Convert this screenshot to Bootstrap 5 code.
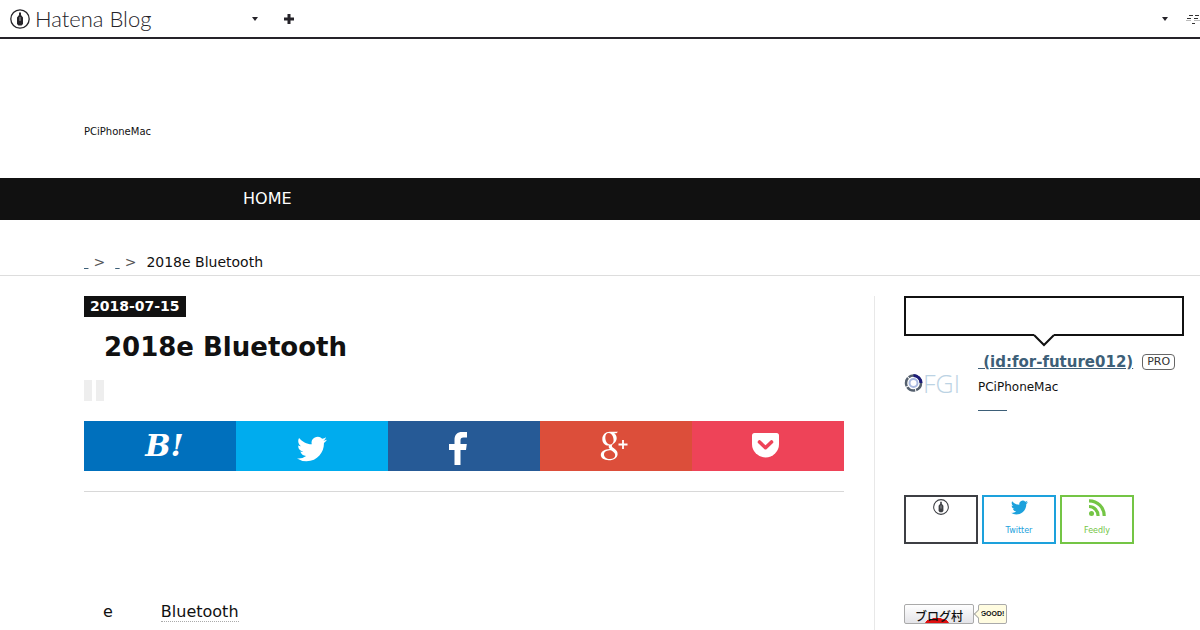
<!DOCTYPE html>
<html lang="ja">
<head>
<meta charset="utf-8">
<meta name="viewport" content="width=device-width, initial-scale=1">
<title>2018e Bluetooth</title>
<link rel="stylesheet" href="https://cdn.jsdelivr.net/npm/bootstrap@5.3.0/dist/css/bootstrap.min.css">
<style>
  body { font-family: "DejaVu Sans", "Noto Sans CJK JP", sans-serif; color: #111; background: #fff; line-height: 24px; overflow-x: hidden; }
  a { color: #3d5f78; }
  .topbar { height: 39px; border-bottom: 2px solid #252329; color: #252329; padding-left: 10px; overflow: hidden; }
  .brand { font: 300 22px/22px Lato, sans-serif; color: #252329; gap: 5px; width: 242px; }
  .icon-btn { background: none; border: 0; padding: 0; color: inherit; display: flex; }
  .topbar .tail { gap: 17px; }
  .page { padding-left: 84px; padding-right: 16px; }
  .masthead { height: 139px; padding-top: 81px; font-size: 10px; }
  .menu { background: #111; height: 42px; }
  .menu a { color: #fff; margin-left: 159px; }
  .crumbs { height: 56px; padding-top: 30px; border-bottom: 1px solid #ddd; font-size: 14px; }
  .crumbs .sep { color: #555; margin: 0 10px 0 5px; }
  .main-col { padding-right: 30px; border-right: 1px solid #e8e8e8; min-height: 334px; }
  .side-col { width: 280px; margin-left: 29px; flex: none; }
  .date { background: #111; color: #fff; font-size: 14px; line-height: 21px; padding: 0 6px; display: table; }
  .date a { color: #fff; }
  h1 { font-size: 26px; line-height: 36px; font-weight: 700; margin: 12px 0 15px 20px; }
  .tag { width: 8px; height: 21px; background: #eee; }
  .share { margin-top: 20px; }
  .share a { width: 20%; height: 50px; color: #fff; text-decoration: none; }
  .hatebu { background: #0070bd; font: italic 700 30px/50px "DejaVu Serif", serif; padding-left: 9px; }
  .tw { background: #00acee; padding-top: 6px; }
  .fb { background: #265a96; padding: 4px 12px 0 0; }
  .gp { background: #dc4e3a; padding-right: 4px; }
  .pk { background: #ee4358; padding: 0 6px 2px 0; }
  .rule { border-top: 1px solid #d8d8d8; margin-top: 20px; }
  .entry { padding: 108px 0 0 19px; gap: 48px; }
  .entry a { color: #111; text-decoration: none; border-bottom: 1px dotted #aaa; line-height: 20px; }
  .bubble { height: 40px; border: 2px solid #111; position: relative; }
  .bubble svg { position: absolute; left: 50%; top: 100%; margin-left: -11px; }
  .profile { margin-top: 14px; gap: 18px; height: 145px; }
  .profile .logo { width: 56px; padding-top: 19px; font: 300 25px/28px "Open Sans", Lato, sans-serif; color: #bcd3e4; }
  .who { font-size: 15px; font-weight: 700; gap: 9px; white-space: nowrap; }
  .pro { font-size: 11px; line-height: 14px; font-weight: 400; border: 1px solid #666; border-radius: 4px; color: #333; padding: 0 4px; }
  .bio { font-size: 12px; line-height: 26px; }
  .more { width: 29px; height: 11px; border-bottom: 1px solid #3d5f78; display: block; }
  .follow { gap: 4px; }
  .follow a { width: 74px; height: 49px; border: 2px solid; font-size: 8px; line-height: 12px; text-decoration: none; padding-top: 2px; gap: 9px; }
  .rank { margin-top: 60px; gap: 4px; }
  .rank a { height: 20px; text-decoration: none; color: #111; border: 1px solid #aaa; border-radius: 2px; line-height: 22px; }
  .mura { width: 70px; background: radial-gradient(ellipse 12px 5px at 32px 18px, #e01010 95%, transparent), linear-gradient(#fff, #e4e4e8); font-family: "Noto Sans CJK JP", sans-serif; font-size: 12px; font-weight: 500; text-align: center; overflow: hidden; }
  .rank .good { width: 29px; background: #fffce0; font: 700 7px/18px "DejaVu Sans", sans-serif; font-family: "Liberation Sans", sans-serif; text-align: center; position: relative; }
  .good::before { content: ""; position: absolute; left: -4px; top: 6px; width: 6px; height: 6px; background: #fffce0; border: solid #aaa; border-width: 0 0 1px 1px; transform: rotate(45deg); }
</style>
</head>
<body>
<svg class="d-none" xmlns="http://www.w3.org/2000/svg">
  <symbol id="bird" viewBox="0 0 24 24"><path fill="currentColor" d="M23.953 4.57a10 10 0 0 1-2.825.775 4.958 4.958 0 0 0 2.163-2.723c-.951.555-2.005.959-3.127 1.184a4.92 4.92 0 0 0-8.384 4.482C7.69 8.095 4.067 6.13 1.64 3.162a4.822 4.822 0 0 0-.666 2.475c0 1.71.87 3.213 2.188 4.096a4.904 4.904 0 0 1-2.228-.616v.06a4.923 4.923 0 0 0 3.946 4.827 4.996 4.996 0 0 1-2.212.085 4.936 4.936 0 0 0 4.604 3.417 9.867 9.867 0 0 1-6.102 2.105c-.39 0-.779-.023-1.17-.067a13.995 13.995 0 0 0 7.557 2.209c9.053 0 13.998-7.496 13.998-13.985 0-.21 0-.42-.015-.63A9.935 9.935 0 0 0 24 4.59z"/></symbol>
  <symbol id="pen" viewBox="0 0 20 20"><circle cx="10" cy="10" r="9.2" fill="none" stroke="currentColor" stroke-width="1.300"/><path fill="currentColor" d="M9 3.500h2v2.500l2 2.500V15l-1.500 1.500h-3L7 15V8.500L9 6z"/><path d="M10 8v4" stroke="#fff" stroke-width=".6"/></symbol>
</svg>

<header class="topbar d-flex align-items-center justify-content-between">
  <div class="d-flex align-items-center">
    <a class="brand d-flex align-items-center text-decoration-none" href="#"><svg width="20" height="20" aria-hidden="true"><use href="#pen"/></svg><span>Hatena Blog</span></a>
    <button class="icon-btn" aria-label="Menu"><svg width="6" height="4"><path d="M0 0h6L3 4z" fill="currentColor"/></svg></button>
    <button class="icon-btn ms-4" aria-label="Add"><svg width="14" height="10" viewBox="-2 0 14 10"><path d="M5 0v10M0 5h10" stroke="currentColor" stroke-width="3"/></svg></button>
  </div>
  <div class="tail d-flex align-items-center">
    <button class="icon-btn" aria-label="Account"><svg width="6" height="4"><path d="M0 0h6L3 4z" fill="currentColor"/></svg></button>
    <button class="icon-btn" aria-label="Notifications"><svg width="15" height="12"><path d="M4 2.500h4M10 2.500h4M2 5.500h4M9 5.500h4M7 10.500h3" stroke="#333"/><path d="M1 7.500h5M9 7.500h6" stroke="#bbb"/></svg></button>
  </div>
</header>

<div class="page masthead">PCiPhoneMac</div>
<nav class="page menu d-flex align-items-center"><a class="text-decoration-none" href="#">HOME</a></nav>
<nav class="page crumbs" aria-label="Breadcrumb"><a href="#">&nbsp;</a><span class="sep">&gt;</span><a href="#">&nbsp;</a><span class="sep">&gt;</span><span>2018e Bluetooth</span></nav>

<div class="page d-flex mt-3 pt-1">
  <main class="main-col flex-grow-1">
    <div class="date fw-bold"><a class="text-decoration-none" href="#">2018-07-15</a></div>
    <h1>2018e Bluetooth</h1>
    <div class="d-flex gap-1"><span class="tag"></span><span class="tag"></span></div>
    <div class="share d-flex">
      <a class="hatebu text-center" href="#">B!</a>
      <a class="tw d-flex align-items-center justify-content-center" href="#" aria-label="Twitter"><svg width="30" height="30"><use href="#bird"/></svg></a>
      <a class="fb d-flex align-items-center justify-content-center" href="#" aria-label="Facebook"><svg width="18" height="33" viewBox="0 0 18 33"><path fill="#fff" d="M5.500 33V18H0v-6h5.500V8C5.500 2.500 8.500 0 13 0h5v5.500h-3.500c-2.400 0-3 1.100-3 3V12h6.300l-.8 6h-5.500v15z"/></svg></a>
      <a class="gp d-flex align-items-center justify-content-center" href="#" aria-label="Google+"><svg width="28" height="30" viewBox="0 0 28 30"><path fill="#fff" fill-rule="evenodd" d="M9.500.8H18l-1.600 1.500h-2.200c1.700 1.200 2.500 3 2.500 5 0 2.300-1.200 3.900-3 5.200-1.500 1.100-1.800 1.700-1.800 2.400 0 1 .9 1.600 2 2.400 2.200 1.500 3.700 3 3.700 5.600 0 3.700-3.400 6.300-8.800 6.300C4 29.200.8 27 .8 24c0-3.800 4-5.900 9-6.100-1.100-1-1.400-2.100-.9-3.300C5 14.800 2.300 11.800 2.300 8.200 2.300 3.900 5.500.8 9.500.8zM8.800 2C6.500 2 5.300 3.900 5.300 6.400c0 3.300 1.800 7 4.800 7 2.200 0 3.500-1.600 3.500-4.200C13.600 6 11.800 2 8.800 2zM11 19.200c-4 0-7 1.200-7 4.300 0 2.600 2.400 4.500 6 4.500 3.300 0 5.200-1.500 5.200-3.800 0-2.100-1.300-3.200-4.200-5z"/><path d="M23 9v9M18.500 13.500h9" stroke="#fff" stroke-width="1.800"/></svg></a>
      <a class="pk d-flex align-items-center justify-content-center" href="#" aria-label="Pocket"><svg width="27" height="25" viewBox="0 0 27 25"><path fill="#fff" d="M2.500 0h22Q27 0 27 2.500V11a13.500 13.500 0 0 1-27 0V2.500Q0 0 2.500 0z"/><path d="M7.500 9l6 5.700 6-5.700" fill="none" stroke="#ee4358" stroke-width="3.600" stroke-linecap="round" stroke-linejoin="round"/></svg></a>
    </div>
    <div class="rule"></div>
    <div class="entry d-flex"><span>e</span><span><a href="#">Bluetooth</a></span></div>
  </main>

  <aside class="side-col">
    <div class="bubble"><svg width="22" height="13" viewBox="0 0 22 13"><path d="M1 0h20v2L11 11.500 1 2z" fill="#fff"/><path d="M1 1l10 10L21 1" fill="none" stroke="#111" stroke-width="2"/></svg></div>
    <div class="profile d-flex">
      <div class="logo d-flex"><svg class="flex-shrink-0 mt-1" width="19" height="20" viewBox="0 0 19 20" fill="none"><circle cx="9.500" cy="10" r="7.500" stroke="#55606e" stroke-width="2.500" stroke-dasharray="9 1"/><path d="M9.500 2.500A7.500 7.500 0 0 1 17 10" stroke="#1c1c78" stroke-width="3"/><circle cx="9.500" cy="10" r="4" stroke="#a9b9e0" stroke-width="2"/></svg><span>FGI</span></div>
      <div>
        <div class="who d-flex align-items-center"><a href="#">&nbsp;(id:for-future012)</a><span class="pro">PRO</span></div>
        <div class="bio">PCiPhoneMac</div>
        <a class="more" href="#" aria-label="More"></a>
      </div>
    </div>
    <div class="follow d-flex">
      <a class="d-flex flex-column align-items-center" style="color:#3d3f44" href="#" aria-label="Hatena Blog"><svg width="16" height="16"><use href="#pen"/></svg></a>
      <a class="d-flex flex-column align-items-center" style="color:#1da1dc" href="#"><svg width="17" height="17"><use href="#bird"/></svg>Twitter</a>
      <a class="d-flex flex-column align-items-center" style="color:#74c545" href="#"><svg width="17" height="17" viewBox="0 0 17 17" fill="none" stroke="currentColor" stroke-width="3.200"><circle cx="2.500" cy="14.500" r="2.500" fill="currentColor" stroke="none"/><path d="M0 7.500a9 9 0 0 1 9 9.500M0 1.800A15 15 0 0 1 15.200 17"/></svg>Feedly</a>
    </div>
    <div class="rank d-flex"><a class="mura" href="#">ブログ村</a><a class="good" href="#">GOOD!</a></div>
  </aside>
</div>
<script src="https://cdn.jsdelivr.net/npm/bootstrap@5.3.0/dist/js/bootstrap.bundle.min.js"></script>
</body>
</html>
